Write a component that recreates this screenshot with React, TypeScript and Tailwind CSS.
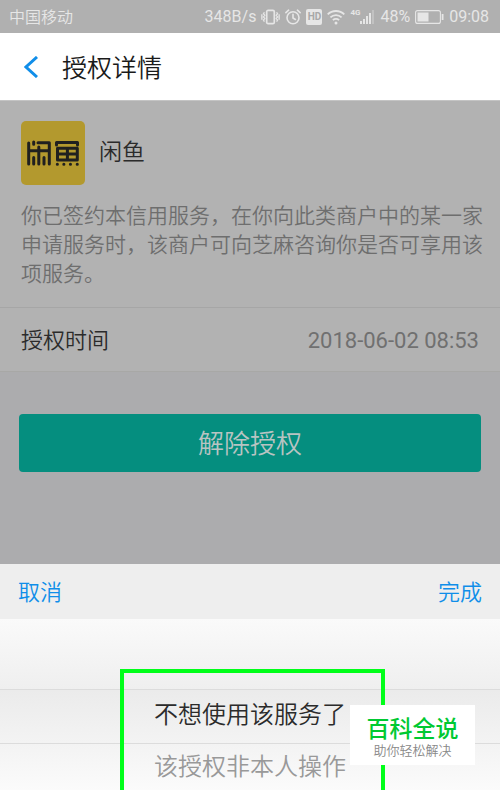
import { useState } from 'react';

const reasons = ['不想使用该服务了', '该授权非本人操作'];

const VibrateIcon = () => (
    <svg width="19" height="16" viewBox="0 0 20 16" fill="none" stroke="currentColor" strokeWidth="1.8">
        <rect x="6" y="1" width="8" height="14" rx="1.5" />
        <path d="M3.6 3l-1 1.6 1.4 1.6-1.4 1.7L4 9.600l-1.400 1.700 1 1.600M.9 5v6M16.400 3l1 1.600-1.400 1.600 1.400 1.700L16 9.600l1.400 1.700-1 1.600M19.100 5v6" strokeWidth="1.400" />
    </svg>
);

const AlarmIcon = () => (
    <svg width="16" height="16" viewBox="0 0 16 16" fill="none" stroke="currentColor" strokeWidth="1.6" strokeLinecap="round">
        <circle cx="8" cy="8.700" r="6" />
        <path d="M8 5.200v3.800l2.400 1.500M.9 3.600L3.600 1.200M15.100 3.600L12.400 1.200" />
    </svg>
);

const WifiIcon = () => (
    <svg width="18" height="16" viewBox="0 0 18 16" fill="none" stroke="currentColor" strokeWidth="1.8">
        <path d="M.7 5.400a11.800 11.800 0 0 1 16.600 0M3.400 8.400a8 8 0 0 1 11.200 0M5.900 11.200a4.500 4.500 0 0 1 6.200 0" />
        <circle cx="9" cy="14" r="1.500" fill="currentColor" stroke="none" />
    </svg>
);

const SignalIcon = () => (
    <svg width="15" height="16" viewBox="0 0 15 16" fill="currentColor">
        <rect x="0" y="12" width="2" height="3" />
        <rect x="3" y="10" width="2" height="5" />
        <rect x="6" y="7" width="2" height="8" />
        <rect x="9" y="4" width="2" height="11" />
        <rect x="12" y="1" width="2" height="14" opacity=".35" />
    </svg>
);

const BatteryIcon = () => (
    <svg width="29" height="14" viewBox="0 0 29 14" fill="none" stroke="currentColor">
        <rect x=".6" y=".6" width="24.800" height="12.800" rx="2" strokeWidth="1.100" />
        <rect x="2.500" y="2.500" width="11" height="9" fill="currentColor" stroke="none" />
        <path d="M27.600 4v6" strokeWidth="1.800" />
    </svg>
);

const XianyuLogo = () => (
    <svg width="64" height="64" viewBox="0 0 64 64" fill="none" stroke="#20201f" strokeWidth="3" strokeLinecap="round" strokeLinejoin="round">
        <rect width="64" height="64" rx="5" fill="#b3992e" stroke="none" />
        <path d="M7.700 22v21M12.700 21v2.200M17 21.800h11.300V43M7.700 29.700h20.600M17.800 26v17M12.700 36.500V43M23 36.500V43" />
        <path d="M35.500 24v-2.500H56.500V24M36.500 27.300h19.800v11.700H36.500zM36.500 33h19.800M46.400 27.300V39" />
        <path d="M36.300 43.300h.1M42.800 43.300h.1M49.400 43.300h.1M56.200 43.300h.1" />
    </svg>
);

const StatusBar = () => (
    <div className="flex h-[33px] items-center justify-between bg-[#b0b0b0] pl-[9px] pr-[11px] pt-px text-base leading-5 text-[#e6e6e6]">
        <span className="pt-0.5">中国移动</span>
        <div className="flex items-center gap-[5px] font-normal">
            <span>348B/s</span>
            <VibrateIcon />
            <AlarmIcon />
            <span className="flex h-4 w-4 items-center justify-center rounded-[2px] bg-[#e6e6e6] text-[10px] font-bold leading-4 text-[#a8a8a8]">HD</span>
            <WifiIcon />
            <span className="flex items-start">
                <span className="text-[8px] font-bold leading-[8px]">4G</span>
                <SignalIcon />
            </span>
            <span>48%</span>
            <BatteryIcon />
            <span>09:08</span>
        </div>
    </div>
);

export default function App() {
    const [selected, setSelected] = useState(0);

    return (
        <div className="flex min-h-screen flex-col overflow-hidden bg-[#acacae] font-[Roboto,'Noto_Sans_CJK_SC',sans-serif] font-[350] text-[#2b2b2b]">
            <StatusBar />

            <header className="flex h-[67px] items-center gap-6 bg-white pl-6 text-[#1a1a1a]">
                <button aria-label="返回" className="text-[#108ee9]">
                    <svg width="14" height="22" viewBox="0 0 14 22" fill="none" stroke="currentColor" strokeWidth="3">
                        <path d="M13 1L2 11l11 10" />
                    </svg>
                </button>
                <h1 className="pt-1 text-[25px] leading-8">授权详情</h1>
            </header>

            <main className="flex grow flex-col">
                <section className="border-y border-t-[#c4c4c4] border-b-[#a6a6a6] bg-[#b2b2b2] pb-[18px] pl-[21px] pr-4 pt-5">
                    <div className="flex items-center gap-[14px]">
                        <XianyuLogo />
                        <h2 className="text-[23px] leading-8">闲鱼</h2>
                    </div>
                    <p className="mt-[17px] text-[21px] leading-[29px] text-[#6e6e6e]">
                        你已签约本信用服务，在你向此类商户中的某一家申请服务时，该商户可向芝麻咨询你是否可享用该项服务。
                    </p>
                </section>
                <dl className="flex h-16 items-center justify-between border-b border-[#a8a8a6] bg-[#b2b2b2] px-[21px] pt-0.5 text-[22px] leading-8">
                    <dt>授权时间</dt>
                    <dd className="font-normal text-[#707070]">2018-06-02 08:53</dd>
                </dl>
                <div className="px-[19px] pb-[92px] pt-[42px]">
                    <button className="h-[58px] w-full rounded bg-[#058e7f] pt-0.5 text-[26px] text-[#b8c4c2]">解除授权</button>
                </div>
            </main>

            {/* Reason picker */}
            <div className="bg-[#eeeeee]">
                <div className="flex h-[55px] items-center justify-between px-[18px] pt-0.5 text-[22px] text-[#108ee9]">
                    <button>取消</button>
                    <button>完成</button>
                </div>
                <div className="relative text-2xl">
                    <div className="h-[70px] bg-linear-to-b from-[#fafafa] to-[#efefef]" />
                    {reasons.map((reason, i) => (
                        <button key={reason} onClick={() => setSelected(i)}
                            className={`block w-full border-t border-[#dcdcdc]
                                ${i === 0 ? 'h-[54px] bg-linear-to-b from-[#ebebeb] to-[#f3f3f3] pb-1' : 'h-[47px] bg-linear-to-b from-[#f3f3f3] to-[#fbfbfb]'}
                                ${i === selected ? 'text-[#2b2b2b]' : 'text-[#999999]'}`}>
                            {reason}
                        </button>
                    ))}
                    {/* Highlight frame and watermark lie over the wheel */}
                    <div className="pointer-events-none absolute inset-x-[24%] bottom-0 top-[50px] -mr-[5px] border-4 border-b-0 border-[#00ff19]" />
                    <div className="absolute bottom-[25px] right-[25px] flex h-[60px] w-[125px] flex-col items-center justify-center bg-white pt-1.5">
                        <strong className="text-[23px] font-medium leading-[26px] text-[#00c932]">百科全说</strong>
                        <span className="text-[13px] leading-4 text-[#888888]">助你轻松解决</span>
                    </div>
                </div>
            </div>
        </div>
    );
}
